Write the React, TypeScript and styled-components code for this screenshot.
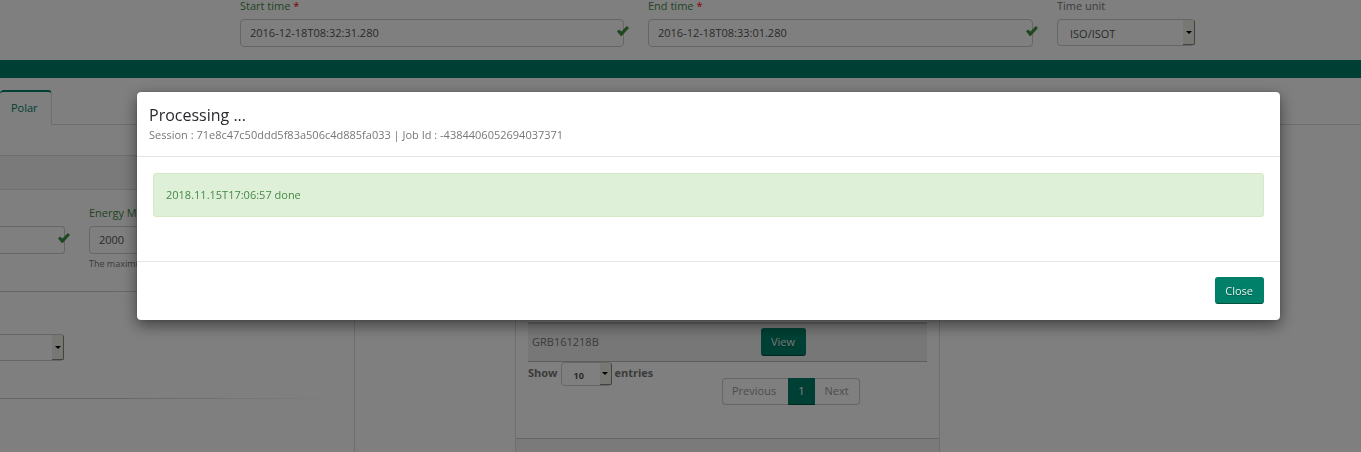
import React from "react";
import styled, { createGlobalStyle } from "styled-components";

const GlobalStyle = createGlobalStyle`
  * { box-sizing: border-box; }
  body {
    margin: 0;
    background: #fff;
    color: #777;
    font-family: "Open Sans", sans-serif;
    font-size: 11px;
    line-height: 16px;
  }
  button, input, select { font: inherit; }
`;

const TimeForm = styled.form`
  display: grid;
  grid-template-columns: 384fr 385fr 304fr;
  column-gap: 24px;
  padding: 0 0 13px 240px;
`;

const Field = styled.div`
  display: flex;
  flex-direction: column;
  align-items: stretch;
  min-width: 0;
`;

const Label = styled.label<{ $valid?: boolean }>`
  margin-bottom: 7px;
  line-height: 12px;
  white-space: nowrap;
  color: ${(p) => (p.$valid ? "#468847" : "#777")};
`;

const Required = styled.span`
  color: #f00;
`;

const InputWrap = styled.div`
  position: relative;
`;

const Input = styled.input<{ $open?: boolean }>`
  display: block;
  width: 100%;
  height: 28px;
  padding: 0 9px 2px;
  border: 1px solid #ccc;
  border-left-width: ${(p) => (p.$open ? 0 : 1)}px;
  border-radius: ${(p) => (p.$open ? "0 4px 4px 0" : "4px")};
  background: transparent;
  color: #555;
`;

const Mark = styled.svg`
  position: absolute;
  top: 7px;
  right: -5px;
  width: 12px;
  height: 10px;
  fill: #3f8f43;
`;

const SelectWrap = styled.div<{ $width: number; $height: number }>`
  position: relative;
  width: ${(p) => p.$width}px;
  height: ${(p) => p.$height}px;
`;

const Select = styled.select<{ $open?: boolean; $small?: boolean }>`
  appearance: none;
  display: block;
  width: 100%;
  height: 100%;
  padding: 2px 12px 0;
  border: 1px solid #ccc;
  border-left-width: ${(p) => (p.$open ? 0 : 1)}px;
  border-radius: ${(p) => (p.$open ? "0 4px 4px 0" : "4px")};
  background: transparent;
  color: #555;
  font-size: ${(p) => (p.$small ? 9 : 11)}px;
`;

const SelectArrow = styled.span`
  position: absolute;
  top: 1px;
  right: 0;
  bottom: 1px;
  display: flex;
  align-items: center;
  justify-content: center;
  width: 12px;
  border-right: 1px solid #888680;
  border-bottom: 1px solid #888680;
  border-radius: 0 2px 2px 0;
  background: #efeee8;
  pointer-events: none;
  &::after {
    content: "";
    border: 3px solid transparent;
    border-top-color: #000;
    border-bottom-width: 0;
  }
`;

const GreenBar = styled.div`
  height: 18px;
  background: #008068;
`;

const Tabs = styled.nav`
  display: flex;
  height: 47px;
  padding-top: 12px;
  border-bottom: 1px solid #ddd;
`;

const Tab = styled.a`
  height: 35px;
  padding: 8px 13px 0 11px;
  border-top: 2px solid #008068;
  border-right: 1px solid #ddd;
  border-radius: 4px 4px 0 0;
  background: #fff;
  color: #008068;
  text-decoration: none;
`;

const Columns = styled.main`
  display: grid;
  grid-template-columns: 355fr 160fr 425fr 421fr;
  padding-top: 30px;
`;

const Panel = styled.section<{ $column: number; $open?: boolean }>`
  grid-column: ${(p) => p.$column};
  min-width: 0;
  border: 1px solid #ddd;
  border-left-width: ${(p) => (p.$open ? 0 : 1)}px;
  border-bottom-width: 0;
`;

const PanelHeading = styled.header`
  height: 34px;
  border-bottom: 1px solid #ddd;
  background: #f5f5f5;
`;

const EnergyForm = styled.form`
  padding: 17px 12px 0 0;
`;

const EnergyRow = styled.div`
  display: grid;
  grid-template-columns: 65px 1fr;
  column-gap: 24px;
`;

const Help = styled.small`
  margin-top: 4px;
  font-size: 9px;
  line-height: 12px;
  color: #777;
`;

const Rule = styled.hr<{ $above: number }>`
  height: 1px;
  margin: ${(p) => p.$above}px 0 42px;
  border: 0;
  background: linear-gradient(to right, #ccc, #ccc 30%, transparent);
`;

const LightCurves = styled.div`
  padding: 132px 12px 0;
`;

const Table = styled.table`
  width: 100%;
  border-collapse: collapse;
  border-top: 2px solid #ccc;
  border-bottom: 1px solid #bbb;
  background: #eee;
`;

const Cell = styled.td<{ $width: string }>`
  width: ${(p) => p.$width};
  height: 38px;
  padding: 0 4px;
`;

const Button = styled.button<{ $height: number }>`
  height: ${(p) => p.$height}px;
  padding: 0 10px 0 9px;
  border: 1px solid #008068;
  border-bottom-color: #00503f;
  border-radius: 3px;
  background: #008068;
  color: #e6f2f0;
  text-shadow: 0 1px 1px rgba(0, 0, 0, 0.3);
  vertical-align: middle;
`;

const TableFooter = styled.div`
  display: flex;
  height: 76px;
`;

const Length = styled.label`
  display: flex;
  gap: 3px;
  width: 194px;
  line-height: 22px;
  font-weight: 700;
`;

const Pages = styled.div`
  display: flex;
  height: 27px;
  margin-top: 16px;
`;

const Page = styled.button<{ $active?: boolean }>`
  padding: 0 10px 0 9px;
  border: 1px solid ${(p) => (p.$active ? "#008068" : "#ccc")};
  border-bottom-color: ${(p) => (p.$active ? "#00503f" : "#ccc")};
  background: ${(p) => (p.$active ? "#008068" : "transparent")};
  color: ${(p) => (p.$active ? "#fff" : "#999")};
  &:first-child { border-right: 0; border-radius: 4px 0 0 4px; padding-right: 12px; }
  &:last-child { border-left: 0; border-radius: 0 4px 4px 0; }
`;

const PanelFooter = styled.footer`
  height: 14px;
  border-top: 1px solid #ccc;
  background: #f5f5f5;
`;

const Backdrop = styled.div`
  position: fixed;
  inset: 0;
  padding: 92px 81px 0 137px;
  background: rgba(0, 0, 0, 0.5);
`;

const Dialog = styled.div`
  border-radius: 4px;
  background: #fff;
  box-shadow: 0 5px 15px rgba(0, 0, 0, 0.5), 0 0 1px rgba(0, 0, 0, 0.5);
`;

const DialogHeader = styled.header`
  padding: 12px 12px 13px;
  border-bottom: 1px solid #e5e5e5;
`;

const DialogTitle = styled.h1`
  margin: 0;
  font-size: 16px;
  line-height: 23px;
  font-weight: 400;
  color: #29292e;
`;

const SessionText = styled.p`
  margin: 0;
`;

const DialogBody = styled.div`
  padding: 16px 16px 44px;
`;

const Alert = styled.div`
  padding: 13px 12px;
  border: 1px solid #d6e9c6;
  border-radius: 3px;
  background: #dff0d8;
  color: #468847;
`;

const DialogFooter = styled.footer`
  display: flex;
  justify-content: flex-end;
  padding: 15px 16px 16px;
  border-top: 1px solid #e5e5e5;
`;

function ValidMark() {
  return (
    <Mark viewBox="0 0 12 10" aria-hidden="true">
      <path d="M0 5.6 2 3.5 4.5 5.6 9.8 0 12 2 4.7 9.9 3.8 9.9Z" />
    </Mark>
  );
}

function TimeField({ id, label, value }: { id: string; label: string; value: string }) {
  return (
    <Field>
      <Label htmlFor={id} $valid>
        {label} <Required>*</Required>
      </Label>
      <InputWrap>
        <Input id={id} defaultValue={value} />
        <ValidMark />
      </InputWrap>
    </Field>
  );
}

export default function App() {
  return (
    <>
      <GlobalStyle />
      <TimeForm>
        <TimeField id="start" label="Start time" value="2016-12-18T08:32:31.280" />
        <TimeField id="end" label="End time" value="2016-12-18T08:33:01.280" />
        <Field>
          <Label htmlFor="unit">Time unit</Label>
          <SelectWrap $width={138} $height={27}>
            <Select id="unit"><option>ISO/ISOT</option></Select>
            <SelectArrow />
          </SelectWrap>
        </Field>
      </TimeForm>
      <GreenBar />
      <Tabs><Tab href="#polar">Polar</Tab></Tabs>
      <Columns>
        <Panel $column={1} $open>
          <PanelHeading />
          <EnergyForm>
            <EnergyRow>
              <Field>
                <Label htmlFor="min">&nbsp;</Label>
                <InputWrap>
                  <Input id="min" $open />
                  <ValidMark />
                </InputWrap>
              </Field>
              <Field>
                <Label htmlFor="max" $valid>Energy Max</Label>
                <Input id="max" defaultValue="2000" />
                <Help>The maximum</Help>
              </Field>
            </EnergyRow>
            <Rule $above={21} />
            <SelectWrap $width={64} $height={27}>
              <Select $open />
              <SelectArrow />
            </SelectWrap>
            <Rule $above={37} />
          </EnergyForm>
        </Panel>
        <Panel $column={3}>
          <PanelHeading />
          <LightCurves>
            <Table>
              <tbody>
                <tr>
                  <Cell $width="229px">GRB161218B</Cell>
                  <Cell $width="auto"><Button type="button" $height={28}>View</Button></Cell>
                </tr>
              </tbody>
            </Table>
            <TableFooter>
              <Length>
                Show
                <SelectWrap $width={51} $height={24}>
                  <Select $small><option>10</option></Select>
                  <SelectArrow />
                </SelectWrap>
                entries
              </Length>
              <Pages>
                <Page type="button">Previous</Page>
                <Page type="button" $active>1</Page>
                <Page type="button">Next</Page>
              </Pages>
            </TableFooter>
          </LightCurves>
          <PanelFooter />
        </Panel>
      </Columns>
      <Backdrop>
        <Dialog role="dialog" aria-modal="true" aria-labelledby="dialog-title">
          <DialogHeader>
            <DialogTitle id="dialog-title">Processing ...</DialogTitle>
            <SessionText>Session : 71e8c47c50ddd5f83a506c4d885fa033 | Job Id : -4384406052694037371</SessionText>
          </DialogHeader>
          <DialogBody>
            <Alert role="status">2018.11.15T17:06:57 done</Alert>
          </DialogBody>
          <DialogFooter>
            <Button type="button" $height={27}>Close</Button>
          </DialogFooter>
        </Dialog>
      </Backdrop>
    </>
  );
}
